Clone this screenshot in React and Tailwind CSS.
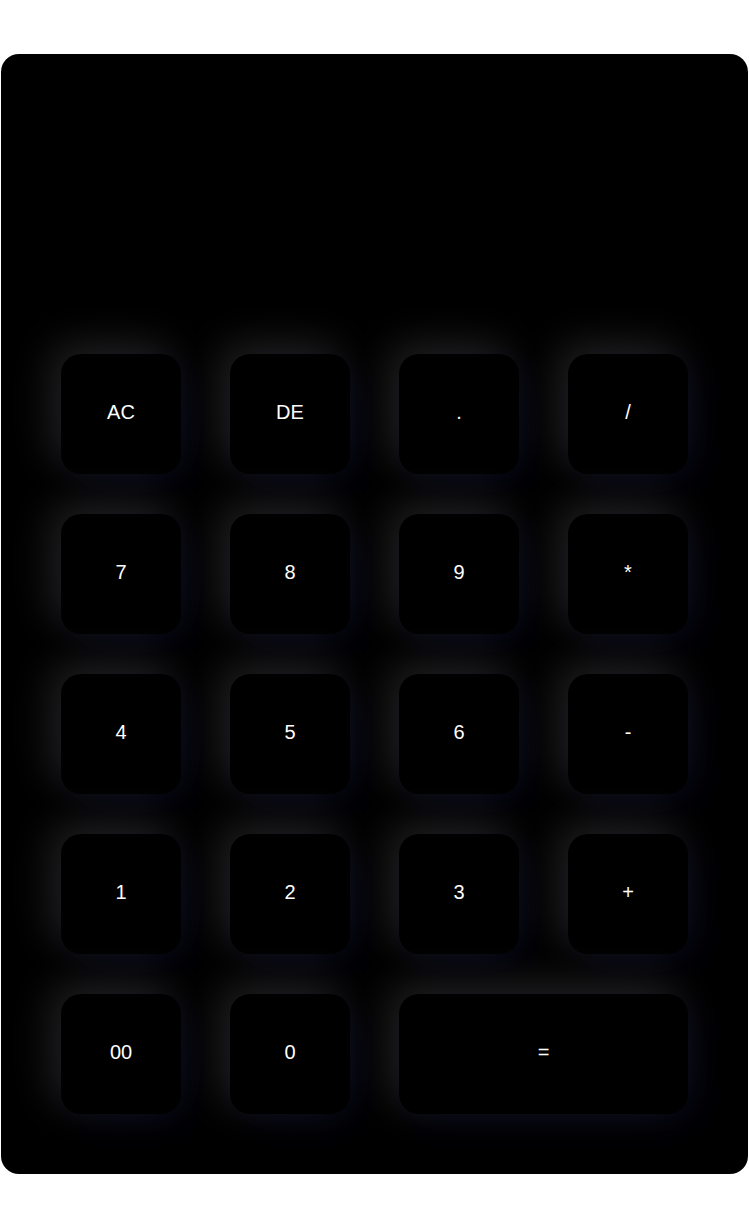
import React from 'react';

const keys = ['AC', 'DE', '.', '/', '7', '8', '9', '*', '4', '5', '6', '-', '1', '2', '3', '+', '00', '0', '='];

const App = () => {
  return (
    <div className="min-h-[1218px] bg-white pt-[54px] px-[1px] font-['Liberation_Sans',Arial,sans-serif]">
      <div className="w-[747px] bg-black rounded-[18px] overflow-hidden">
        <div className="h-[240px]" />
        <div className="grid grid-cols-4 gap-x-[49px] gap-y-[40px] p-[60px]">
          {keys.map((k) => (
            <button
              key={k}
              className={`h-[120px] pb-1 rounded-[20px] bg-black text-white text-[20px] shadow-[-10px_-10px_40px_rgba(255,255,255,0.13),10px_10px_40px_rgba(0,0,255,0.07)] ${
                k === '=' ? 'col-span-2' : ''
              }`}
            >
              {k}
            </button>
          ))}
        </div>
      </div>
    </div>
  );
};

export default App;
